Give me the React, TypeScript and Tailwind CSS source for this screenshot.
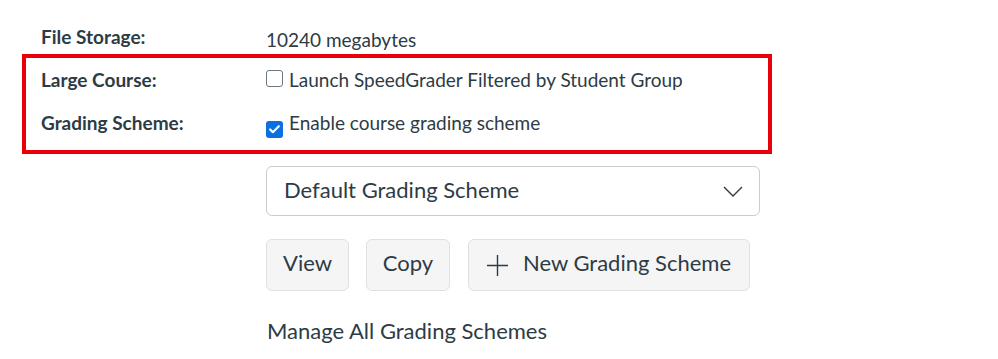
import { Check } from 'lucide-react'

const font = { fontFamily: 'Lato, "Noto Sans", sans-serif' }

function Row({ label, children, pad }: { label: string; children: React.ReactNode; pad: string }) {
  return (
    <div className={`flex h-[44px] items-center ${pad}`}>
      <div className="w-[225px] shrink-0 text-[19px] font-bold text-[#2d3b45]">{label}</div>
      <div className="flex items-center text-[19px] text-[#2d3b45]">{children}</div>
    </div>
  )
}

export default function App() {
  return (
    <div className="h-[359px] w-[998px] bg-white pl-[22px] pt-[21px]" style={font}>
      <div className="flex h-[33px] items-center pl-[19px]">
        <div className="w-[225px] shrink-0 text-[19px] font-bold text-[#2d3b45]">File Storage:</div>
        <div className="pt-[6px] text-[19px] text-[#2d3b45]">10240 megabytes</div>
      </div>

      <div className="w-[750px] border-4 border-[#e8000b] pb-[4px]">
        <Row label="Large Course:" pad="pl-[15px]">
          <span className="mr-[6px] -mt-[4px] h-[17px] w-[17px] rounded-[3px] border border-[#6b7780] bg-white" />
          <span>Launch SpeedGrader Filtered by Student Group</span>
        </Row>
        <Row label="Grading Scheme:" pad="pl-[15px] pb-[2px]">
          <span className="mr-[6px] mt-[12px] flex h-[17px] w-[17px] items-center justify-center rounded-[3px] bg-[#0b6fe0]">
            <Check className="h-[13px] w-[13px] text-white" strokeWidth={4} />
          </span>
          <span>Enable course grading scheme</span>
        </Row>
      </div>

      <div className="ml-[244px] mt-[12px] flex w-[494px] flex-col">
        <div className="flex h-[50px] items-center justify-between rounded-[6px] border border-[#c7cdd1] pl-[17px] pr-[16px] text-[22px] text-[#2d3b45]">
          <span className="pb-[4px]">Default Grading Scheme</span>
          <svg width="20" height="11" viewBox="0 0 20 11" fill="none">
            <path d="M1 1 L10 10 L19 1" stroke="#2d3b45" strokeWidth="1.4" />
          </svg>
        </div>

        <div className="mt-[23px] flex gap-[17px] text-[22px] text-[#2d3b45]">
          <button className="flex h-[52px] w-[83px] items-center justify-center rounded-[6px] border border-[#dde1e4] bg-[#f5f5f5] pb-[5px]">
            View
          </button>
          <button className="flex h-[52px] w-[84px] items-center justify-center rounded-[6px] border border-[#dde1e4] bg-[#f5f5f5] pb-[5px]">
            Copy
          </button>
          <button className="ml-px flex h-[52px] w-[282px] items-center justify-center gap-[15px] rounded-[6px] border border-[#dde1e4] bg-[#f5f5f5]">
            <svg width="21" height="21" viewBox="0 0 21 21" fill="none">
              <path d="M10.5 0 V21 M0 10.5 H21" stroke="#2d3b45" strokeWidth="1.4" />
            </svg>
            <span className="pb-[5px]">New Grading Scheme</span>
          </button>
        </div>

        <div className="mt-[23px] pl-px text-[22px] text-[#2d3b45]">Manage All Grading Schemes</div>
      </div>
    </div>
  )
}
